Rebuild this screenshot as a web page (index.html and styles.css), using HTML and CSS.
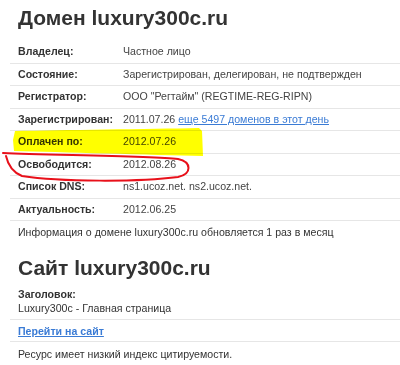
FILE: index.html
```html
<!DOCTYPE html>
<html lang="ru">
<head>
<meta charset="utf-8">
<link rel="stylesheet" href="styles.css">
</head>
<body>
<div class="page">
  <h1 class="title">Домен luxury300c.ru</h1>
  <table class="info">
    <colgroup><col class="c-label"><col></colgroup>
    <tr><th>Владелец:</th><td>Частное лицо</td></tr>
    <tr><th>Состояние:</th><td>Зарегистрирован, делегирован, не подтвержден</td></tr>
    <tr><th>Регистратор:</th><td>ООО "Регтайм" (REGTIME-REG-RIPN)</td></tr>
    <tr><th>Зарегистрирован:</th><td>2011.07.26 <a href="#">еще 5497 доменов в этот день</a></td></tr>
    <tr><th>Оплачен по:</th><td>2012.07.26</td></tr>
    <tr><th>Освободится:</th><td>2012.08.26</td></tr>
    <tr><th>Список DNS:</th><td>ns1.ucoz.net. ns2.ucoz.net.</td></tr>
    <tr><th>Актуальность:</th><td>2012.06.25</td></tr>
  </table>
  <p class="note">Информация о домене luxury300c.ru обновляется 1 раз в месяц</p>
  <h2 class="title site-title">Сайт luxury300c.ru</h2>
  <div class="site-block">
    <div class="lbl">Заголовок:</div>
    <div>Luxury300c - Главная страница</div>
  </div>
  <div class="site-link"><a href="#">Перейти на сайт</a></div>
  <p class="cite">Ресурс имеет низкий индекс цитируемости.</p>

  <svg class="marks" width="400" height="365" viewBox="0 0 400 365">
    <path class="hl" d="M15,131 C60,130 150,129 199,128 L202,131 L203,156 C150,155 60,152 14,151 L13,140 Z"/>
    <path class="circle" d="M3,153 C50,155 150,156 178,159 C192,162 192,174 178,177 C140,182 60,182 22,176 C12,172 8,165 6,156"/>
  </svg>
</div>
</body>
</html>
```

FILE: styles.css
```css
html, body {
  margin: 0;
  padding: 0;
  background: #fff;
}
body {
  font-family: "Liberation Sans", Arial, sans-serif;
  font-size: 10.6px;
  color: #333;
}
.page {
  position: relative;
  width: 400px;
  height: 365px;
  overflow: hidden;
}
.title {
  margin: 0;
  padding: 5px 0 0 18px;
  font-size: 21px;
  line-height: 26px;
  font-weight: bold;
  color: #333;
}
.info {
  margin-top: 10px;
  margin-left: 10px;
  width: 400px;
  border-collapse: collapse;
  table-layout: fixed;
}
.c-label {
  width: 113px;
}
.info th, .info td {
  padding: 4px 0 4px;
  height: 13.5px;
  line-height: 13.5px;
  border-bottom: 1px solid #e6e6e6;
  text-align: left;
  white-space: nowrap;
}
.info th {
  padding-left: 8px;
  font-weight: bold;
  color: #333;
}
.info td {
  color: #444;
}
a {
  color: #3a7bd5;
}
.note {
  margin: 4px 0 0 18px;
  line-height: 14px;
}
.site-title {
  padding-top: 16px;
}
.site-block {
  margin: 6px 0 0 10px;
  padding: 0 0 4px 8px;
  line-height: 14px;
  border-bottom: 1px solid #e6e6e6;
}
.site-block .lbl {
  font-weight: bold;
}
.site-link {
  margin-left: 10px;
  padding: 4px 0 3px 8px;
  line-height: 14px;
  border-bottom: 1px solid #e6e6e6;
}
.site-link a {
  font-weight: bold;
}
.cite {
  margin: 5px 0 0 18px;
  line-height: 14px;
}
.marks {
  position: absolute;
  left: 0;
  top: 0;
  pointer-events: none;
}
.hl {
  fill: #ffff00;
  mix-blend-mode: multiply;
}
.circle {
  fill: none;
  stroke: #e8101a;
  stroke-width: 2;
  stroke-linecap: round;
}
```
